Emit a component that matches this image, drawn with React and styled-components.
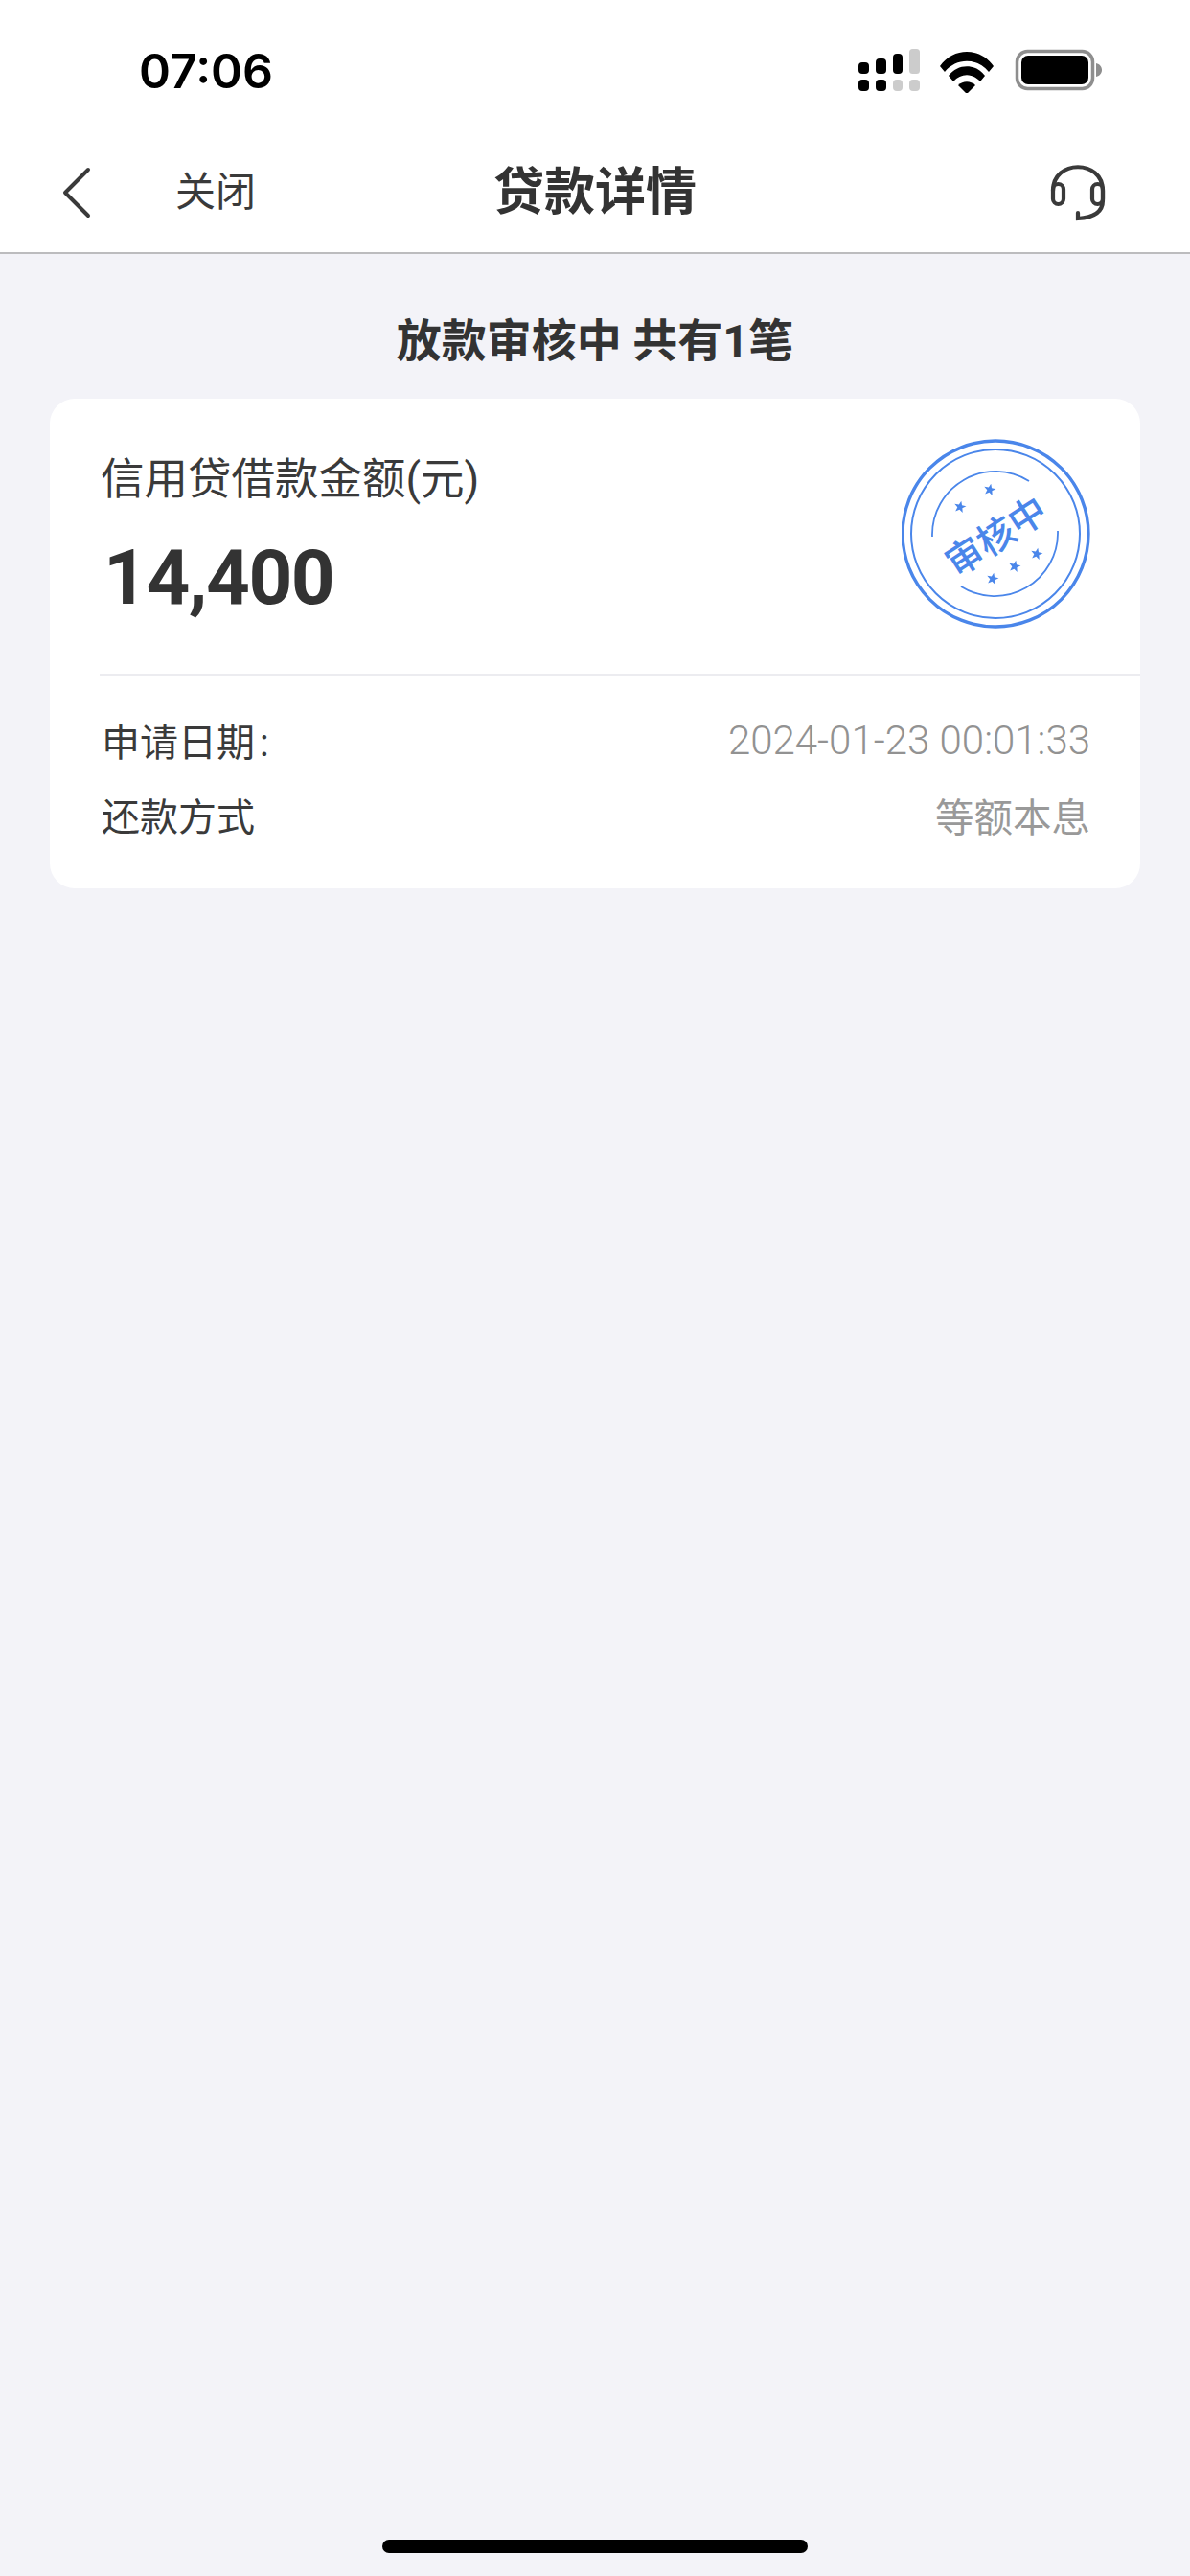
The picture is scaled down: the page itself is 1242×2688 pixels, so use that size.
import React from "react";
import styled, { createGlobalStyle } from "styled-components";

const GlobalStyle = createGlobalStyle`
  html, body {
    margin: 0;
    padding: 0;
    background: #f3f3f8;
  }
  * {
    box-sizing: border-box;
  }
`;

const cjk = `Roboto, "Noto Sans CJK SC", sans-serif`;

const Page = styled.div`
  position: relative;
  width: 1242px;
  height: 2688px;
  overflow: hidden;
  background: #f3f3f8;
  font-family: ${cjk};
  color: #333;
`;

const StatusBar = styled.div`
  height: 136px;
  background: #fff;
  display: flex;
  justify-content: space-between;
  align-items: flex-start;
  padding: 42px 92px 0 145px;
`;

const Time = styled.div`
  font-family: Inter, sans-serif;
  font-weight: 600;
  font-size: 50px;
  line-height: 64px;
  color: #000;
`;

const StatusIcons = styled.svg`
  display: block;
  margin-top: 9px;
`;

const Nav = styled.div`
  height: 129px;
  background: #fff;
  border-bottom: 2px solid #bcbcbe;
  display: grid;
  grid-template-columns: 1fr auto 1fr;
  align-items: center;
  padding: 2px 88px 0 88px;
`;

const NavLeft = styled.div`
  display: flex;
  align-items: center;
  gap: 88px;
  margin-left: -23px;
`;

const CloseText = styled.span`
  font-size: 42px;
  line-height: 60px;
  color: #3a3a3a;
`;

const Title = styled.div`
  font-size: 53px;
  font-weight: 700;
  line-height: 70px;
  color: #333;
`;

const NavRight = styled.div`
  display: flex;
  justify-content: flex-end;
`;

const Subtitle = styled.div`
  margin: 61px 0 30px;
  text-align: center;
  font-size: 47px;
  font-weight: 700;
  line-height: 60px;
  color: #333;
`;

const Card = styled.div`
  margin: 0 52px;
  background: #fff;
  border-radius: 26px;
  overflow: hidden;
`;

const CardHead = styled.div`
  height: 289px;
  margin-left: 52px;
  padding: 41px 49px 0 2px;
  border-bottom: 2px solid #ececf0;
  display: flex;
  justify-content: space-between;
  align-items: flex-start;
`;

const Label = styled.div`
  margin-top: 14px;
  margin-left: -1px;
  font-size: 45.5px;
  line-height: 60px;
  color: #3a3a3a;
`;

const Amount = styled.div`
  margin: 26px 0 0 2px;
  font-family: Roboto, sans-serif;
  font-weight: 700;
  font-size: 80px;
  line-height: 92px;
  letter-spacing: -1.5px;
  color: #333;
`;

const Stamp = styled.svg`
  display: block;
  flex: none;
  margin-top: 1px;
`;

const Rows = styled.div`
  padding: 28px 52px 38px 54px;
`;

const Row = styled.div`
  display: flex;
  justify-content: space-between;
  align-items: center;
  height: 78px;
`;

const RowLabel = styled.span`
  font-size: 40px;
  color: #3a3a3a;
`;

const Colon = styled.span`
  margin-left: 5px;
`;

const RowValue = styled.span`
  font-size: ${(p) => (p.$date ? "42px" : "40.5px")};
  font-weight: ${(p) => (p.$date ? 300 : 400)};
  color: ${(p) => (p.$date ? "#929292" : "#999")};
`;

const HomeBar = styled.div`
  position: absolute;
  left: 399px;
  top: 2650px;
  width: 444px;
  height: 14px;
  border-radius: 7px;
  background: #000;
`;

const BLUE = "#4a86ea";

const Star = ({ x, y, r = 6.5 }) => {
  const pts = [];
  for (let i = 0; i < 10; i++) {
    const rad = i % 2 ? r * 0.42 : r;
    const a = -Math.PI / 2 + (i * Math.PI) / 5 + 0.2;
    pts.push(`${(x + rad * Math.cos(a)).toFixed(2)},${(y + rad * Math.sin(a)).toFixed(2)}`);
  }
  return <polygon points={pts.join(" ")} fill={BLUE} />;
};

const StatusGlyphs = () => (
  <StatusIcons width="256" height="46" viewBox="0 0 256 46">
    {/* signal, two rows of bars */}
    <rect x="2" y="14" width="11" height="12" rx="4" fill="#000" />
    <rect x="20" y="10" width="11" height="16" rx="4" fill="#000" />
    <rect x="38" y="5" width="10" height="21" rx="4" fill="#000" />
    <rect x="55" y="0" width="11" height="26" rx="3.5" fill="#ccc" />
    <rect x="2" y="32" width="11" height="12" rx="4" fill="#000" />
    <rect x="20" y="32" width="11" height="12" rx="4" fill="#000" />
    <rect x="38" y="32" width="10" height="12" rx="4" fill="#ccc" />
    <rect x="55" y="32" width="11" height="12" rx="4" fill="#ccc" />
    {/* wifi */}
    <path d="M87 18 C101 -2 129 -2 143 18 L138 24 C126 9 104 9 92 24 Z" fill="#000" />
    <path d="M96 28 C106 15 124 15 134 28 L129 34 C121 25 109 25 101 34 Z" fill="#000" />
    <path d="M106 38 C111 33 119 33 124 38 L115 47 Z" fill="#000" />
    {/* battery */}
    <rect x="167.5" y="2.5" width="79" height="39" rx="11" fill="none" stroke="#8e8e8e" strokeWidth="3.5" />
    <rect x="172" y="7" width="70" height="30" rx="7" fill="#000" />
    <path d="M250 15 C254 16 256 19 256 22 C256 25 254 28 250 29 Z" fill="#8e8e8e" />
  </StatusIcons>
);

const BackIcon = () => (
  <svg width="30" height="54" viewBox="0 0 30 54" style={{ display: "block" }}>
    <path d="M27 3 L3 27 L27 51" fill="none" stroke="#3a3a3a" strokeWidth="4" strokeLinecap="round" strokeLinejoin="round" />
  </svg>
);

const HeadsetIcon = () => (
  <svg width="58" height="60" viewBox="0 0 58 60" style={{ display: "block" }}>
    <g fill="none" stroke="#3a3a3a" strokeWidth="4.2" strokeLinecap="round">
      <path d="M3 28 C3 -5 55 -5 55 28 L55 38 C55 50 46 56 29 57 L29 51" />
      <rect x="3" y="21" width="11" height="21" rx="5.5" />
      <rect x="44" y="21" width="11" height="21" rx="5.5" />
    </g>
  </svg>
);

const StampMark = () => (
  <Stamp width="200" height="200" viewBox="0 0 200 200">
    <circle cx="98" cy="99" r="97" fill="none" stroke={BLUE} strokeWidth="3.4" />
    <circle cx="98" cy="99" r="88" fill="none" stroke={BLUE} strokeWidth="2" />
    <path d="M32 102 A66 66 0 0 1 133 44" fill="none" stroke={BLUE} strokeWidth="1.8" />
    <path d="M163 96 A66 66 0 0 1 62 154" fill="none" stroke={BLUE} strokeWidth="1.8" />
    <Star x={92} y={53} />
    <Star x={61} y={71} />
    <Star x={141} y={120} />
    <Star x={118} y={133} />
    <Star x={95} y={146} />
    <text
      x="97"
      y="99"
      transform="rotate(-33 97 99)"
      textAnchor="middle"
      dominantBaseline="central"
      fontFamily='"Noto Sans CJK SC", sans-serif'
      fontSize="39"
      fontWeight="500"
      fill={BLUE}
    >
      审核中
    </text>
  </Stamp>
);

export default function App() {
  return (
    <Page>
      <GlobalStyle />
      <StatusBar>
        <Time>07:06</Time>
        <StatusGlyphs />
      </StatusBar>
      <Nav>
        <NavLeft>
          <BackIcon />
          <CloseText>关闭</CloseText>
        </NavLeft>
        <Title>贷款详情</Title>
        <NavRight>
          <HeadsetIcon />
        </NavRight>
      </Nav>
      <Subtitle>放款审核中 共有1笔</Subtitle>
      <Card>
        <CardHead>
          <div>
            <Label>信用贷借款金额(元)</Label>
            <Amount>14,400</Amount>
          </div>
          <StampMark />
        </CardHead>
        <Rows>
          <Row>
            <RowLabel>
              申请日期<Colon>:</Colon>
            </RowLabel>
            <RowValue $date>2024-01-23 00:01:33</RowValue>
          </Row>
          <Row>
            <RowLabel>还款方式</RowLabel>
            <RowValue>等额本息</RowValue>
          </Row>
        </Rows>
      </Card>
      <HomeBar />
    </Page>
  );
}
